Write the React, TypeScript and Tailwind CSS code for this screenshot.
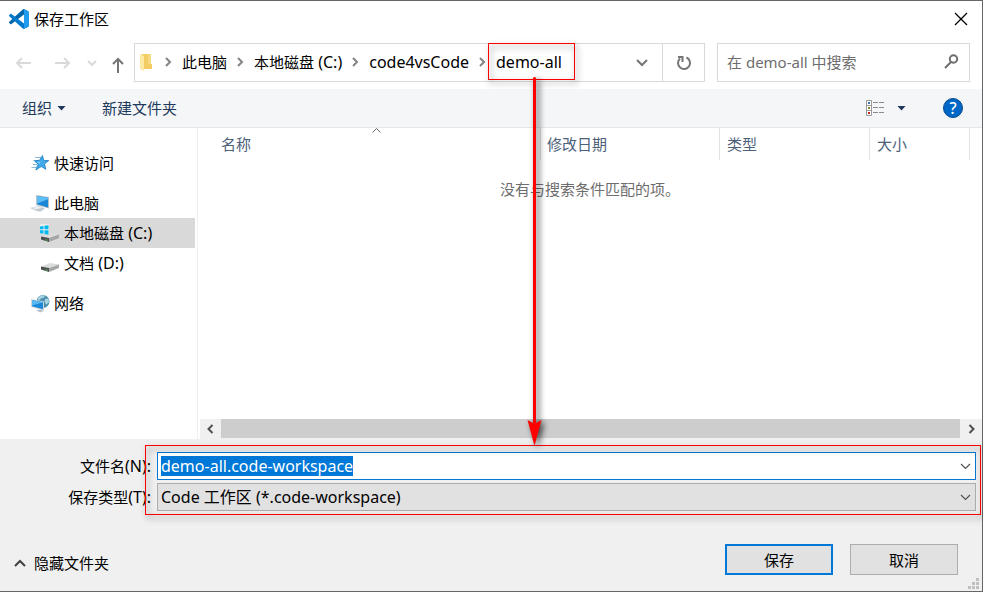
import { useEffect, useRef, type ReactNode } from "react";

function VsCodeLogo() {
  return (
    <svg viewBox="0 0 100 100" className="size-5" aria-hidden="true">
      <path fill="#0065A9" d="M96.4614 10.7962L75.8569 0.875542C73.4719 -0.272773 70.6217 0.211611 68.75 2.08333L1.29858 63.5832C-0.515693 65.2373 -0.513607 68.0937 1.30308 69.7452L6.81272 74.754C8.29793 76.1042 10.5347 76.2036 12.1338 74.9905L93.3609 13.3699C96.086 11.3026 100 13.2462 100 16.6667V16.4275C100 14.0265 98.6246 11.8378 96.4614 10.7962Z" />
      <path fill="#007ACC" d="M96.4614 89.2038L75.8569 99.1245C73.4719 100.273 70.6217 99.7884 68.75 97.9167L1.29858 36.4169C-0.515693 34.7627 -0.513607 31.9063 1.30308 30.2548L6.81272 25.246C8.29793 23.8958 10.5347 23.7964 12.1338 25.0095L93.3609 86.6301C96.086 88.6974 100 86.7538 100 83.3334V83.5726C100 85.9735 98.6246 88.1622 96.4614 89.2038Z" />
      <path fill="#1F9CF0" d="M75.8578 99.1263C73.4721 100.274 70.6219 99.7885 68.75 97.9166C71.0564 100.223 75 98.5895 75 95.3278V4.67213C75 1.41039 71.0564 -0.223106 68.75 2.08329C70.6219 0.211402 73.4721 -0.273666 75.8578 0.873633L96.4587 10.7807C98.6234 11.8217 100 14.0112 100 16.4132V83.5871C100 85.9891 98.6234 88.1786 96.4586 89.2196L75.8578 99.1263Z" />
    </svg>
  );
}

type StrokeProps = { box: string; d: string; className: string; width?: number };

function Stroke({ box, d, className, width = 2 }: StrokeProps) {
  return (
    <svg viewBox={box} className={className} fill="none" stroke="currentColor" strokeWidth={width} aria-hidden="true">
      <path d={d} />
    </svg>
  );
}

function Caret() {
  return (
    <svg viewBox="0 0 9 5" className="h-[5px] w-[9px]" aria-hidden="true">
      <path fill="#1e395b" d="M0.5 0h8L4.500 4.500z" />
    </svg>
  );
}

function FolderIcon() {
  return (
    <svg viewBox="0 0 12 18" className="h-[18px] w-3" aria-hidden="true">
      <path fill="#f3cd64" d="M2 1h9v10h1v5H4z" />
      <path fill="#f7da84" d="M8 1h3v10h-3z" />
      <path fill="#ffe9a6" d="M0 2q0-1 1-1l3 2.500v14.500l-4-2z" />
    </svg>
  );
}

function StarIcon() {
  return (
    <svg viewBox="0 0 18 18" className="h-[18px] w-[18px]" aria-hidden="true">
      <path fill="none" stroke="#8ab9dc" d="M4 3.500h6M2.500 6.500h5M2 10.500h4M0.500 13.500h5" />
      <path fill="#3fa9ec" stroke="#1c7cc0" strokeWidth="0.8" d="M11.500 1.500l1.200 4.900 5 .2-4.200 3.400 1.300 5.300-4.500-2.800-5.500 3.500 2.300-5.700-3.600-3.400 5-.6z" />
      <path fill="#7fcdf8" d="M11 4l-1.500 3.500-3.500.5 2.500 2z" />
    </svg>
  );
}

function ComputerIcon() {
  return (
    <svg viewBox="0 0 20 18" className="h-[18px] w-5" aria-hidden="true">
      <path fill="#c3cbd1" d="M0 14l9-2 6 2.500-4 3H8z" />
      <path fill="#eef1f3" d="M2 14l7-1.500 3 1.200-6 1.600z" />
      <path fill="#b8c1c8" d="M6 1l13 2v11.500L6 11z" />
      <path fill="#1b86d6" d="M7 2l11 1.800v9.600L7 10.300z" />
      <path fill="#5dbdf5" d="M7 2l11 1.800v1.500L7 9.500z" />
    </svg>
  );
}

function DriveIcon({ system = false }: { system?: boolean }) {
  return (
    <svg viewBox="0 0 20 18" className="h-[18px] w-5" aria-hidden="true">
      <path fill="#dcdcdc" d="M1 12.500L10 9l9 1.500-10 3.500z" />
      <path fill="#4b4f50" d="M1 12.500L9 14v4l-8-2.500z" />
      <path fill="#a4a6a8" d="M9 14l10-3.500v3.500L9 18z" />
      <path fill="#58c45a" d="M5.500 15.300l2 .5v1l-2-.5z" />
      {system && (
        <>
          <path fill="#ffffff" fillOpacity="0.5" d="M0 0h9v10H0z" />
          <path fill="#00b7ee" d="M0 2.500L3.500 2v3.200H0zM4.500 1.800L8.500 1.200v4h-4zM0 6.200h3.500v3.500L0 9.200zM4.500 6.200h4v4.500l-4-.7z" />
        </>
      )}
    </svg>
  );
}

function NetworkIcon() {
  return (
    <svg viewBox="0 0 19 19" className="size-[19px]" aria-hidden="true">
      <circle cx="12" cy="7.500" r="6.500" fill="#4d8fae" />
      <path fill="#a9d4e4" d="M8 3q3-2.500 6-1.500l-1 2-3 1-2 2-1.500-1zM14 5l3.500-.5.5 4-3 2-1.500-3z" />
      <path fill="#cdd5da" d="M0 5l13 2.500v9L0 13z" />
      <path fill="#1c88d8" d="M1 6l11 2.300v7L1 12.200z" />
      <path fill="#58b9f2" d="M1 6l11 2.300L1 11.500z" />
      <path fill="#b9c1c7" d="M5 16l5-.5 3 1.500-4 1.500z" />
    </svg>
  );
}

function ViewIcon() {
  return (
    <svg viewBox="0 0 19 16" className="h-4 w-[19px]" aria-hidden="true">
      <path fill="#fff" stroke="#9a9a9a" d="M0.500 0.500h5v15h-5zM0.500 5.500h5M0.500 10.500h5" />
      <path stroke="#8a8a8a" d="M7 2.500h5M13 2.500h5M7 7.500h5M13 7.500h5M7 12.500h5M13 12.500h5" />
      <path fill="#3c78b4" d="M2 2h2v2H2z" />
      <path fill="#8a8a2a" d="M2 7h2v2H2z" />
      <path fill="#c82a1a" d="M2 12h2v2H2z" />
    </svg>
  );
}

function Latin({ children }: { children: ReactNode }) {
  return <span className="text-base leading-5">{children}</span>;
}

function CrumbArrow() {
  return (
    <span className="flex w-[27px] justify-center text-[#848484]">
      <Stroke box="0 0 7 10" d="M1 1l4 4-4 4" className="h-[10px] w-[7px]" />
    </span>
  );
}

function Crumb({ children }: { children: ReactNode }) {
  return (
    <button type="button" className="whitespace-pre">
      {children}
    </button>
  );
}

type PlaceProps = { icon: ReactNode; children: ReactNode; nested?: boolean; selected?: boolean };

function Place({ icon, children, nested = false, selected = false }: PlaceProps) {
  return (
    <li className={selected ? "bg-[#d9d9d9]" : ""}>
      <button
        type="button"
        className={`flex h-[30px] w-full items-center gap-1 whitespace-pre ${nested ? "pl-10" : "pl-[30px]"}`}
      >
        <span className="flex w-5 justify-center">{icon}</span>
        <span>{children}</span>
      </button>
    </li>
  );
}

const headCell = "border-r border-[#e2e2e2] text-left font-normal";
const outline = "pointer-events-none absolute z-10 border border-[#f00] drop-shadow-[2px_3px_3px_rgba(0,0,0,0.6)]";

export default function App() {
  const nameRef = useRef<HTMLInputElement>(null);

  useEffect(() => {
    nameRef.current?.focus();
    nameRef.current?.select();
  }, []);

  return (
    <div className="flex min-h-screen flex-col border-t border-r border-b border-[#666] bg-white font-['Noto_Sans','Noto_Sans_CJK_SC',sans-serif] text-[15px] leading-5 text-black">
      <header className="flex h-9 items-center pr-3.5 pl-[9px]">
        <VsCodeLogo />
        <h1 className="ml-[5px] flex-1">保存工作区</h1>
        <button type="button" aria-label="关闭">
          <Stroke box="0 0 14 14" d="M1 1l12 12M13 1L1 13" width={1.3} className="size-3.5" />
        </button>
      </header>

      <div className="mt-1.5 mb-[7px] flex h-[39px] pr-3">
        <nav className="flex w-[134px] items-center pl-[15px] text-[#d9d9d9]">
          <button type="button" aria-label="后退">
            <Stroke box="0 0 16 12" d="M16 6H2M7 1L2 6l5 5" className="h-3 w-4" />
          </button>
          <button type="button" aria-label="前进" className="ml-6">
            <Stroke box="0 0 16 12" d="M0 6h14M9 1l5 5-5 5" className="h-3 w-4" />
          </button>
          <button type="button" aria-label="最近位置" className="ml-4">
            <Stroke box="0 0 10 6" d="M1 1l4 4 4-4" className="h-1.5 w-2.5" />
          </button>
          <button type="button" aria-label="上移" className="mt-1 ml-[15px] text-[#757575]">
            <Stroke box="0 0 12 16" d="M6 16V2M1 7l5-5 5 5" className="h-4 w-3" />
          </button>
        </nav>

        <div className="mr-3 flex flex-1 items-stretch border border-[#d9d9d9]">
          <div className="flex flex-1 items-center pb-0.5 pl-[5px]">
            <FolderIcon />
            <span className="ml-[3px]">
              <CrumbArrow />
            </span>
            <Crumb>此电脑</Crumb>
            <CrumbArrow />
            <Crumb>
              本地磁盘<Latin> (C:)</Latin>
            </Crumb>
            <CrumbArrow />
            <Crumb>
              <Latin>code4vsCode</Latin>
            </Crumb>
            <CrumbArrow />
            <div className="relative flex h-full items-center">
              <Crumb>
                <Latin>demo-all</Latin>
              </Crumb>
              <div className={`${outline} -top-px -right-[13px] -bottom-px -left-2`} />
              <svg
                viewBox="0 0 24 372"
                className="pointer-events-none absolute top-[33px] left-[26px] z-20 h-[372px] w-6 overflow-visible drop-shadow-[3px_2px_3px_rgba(0,0,0,0.7)]"
                aria-hidden="true"
              >
                <path fill="#f00" d="M11 1q1.500-2 3 0v345l5.500-3-7 26-7-26 5.500 3z" />
              </svg>
            </div>
          </div>
          <button type="button" aria-label="历史记录" className="flex w-10 items-center justify-center text-[#757575]">
            <Stroke box="0 0 12 8" d="M1 1l5 5 5-5" className="h-2 w-3" />
          </button>
          <button type="button" aria-label="刷新" className="flex w-[42px] items-center justify-center border-l border-[#d9d9d9] text-[#757575]">
            <Stroke box="0 0 16 16" d="M10.500 2.500A6 6 0 1 1 4 3.500M2 2h4.500v5" className="size-4" />
          </button>
        </div>

        <label className="flex w-[253px] items-center border border-[#d9d9d9] pr-2.5 pb-0.5 pl-[9px]">
          <input
            type="text"
            aria-label="搜索"
            placeholder="在 demo-all 中搜索"
            className="min-w-0 flex-1 outline-none placeholder:text-[#6d6d6d] placeholder:opacity-100"
          />
          <span className="text-[#6d6d6d]">
            <svg viewBox="0 0 15 15" className="size-[15px]" fill="none" stroke="currentColor" strokeWidth="2" aria-hidden="true">
              <circle cx="9.500" cy="5" r="3.700" />
              <path d="M7 8L1 14" />
            </svg>
          </span>
        </label>
      </div>

      <div className="flex h-[39px] items-center border-b border-[#e5e7e9] bg-[#f4f6f8] pr-[19px] pl-[22px] text-[#1e395b]">
        <button type="button" className="flex items-center gap-[5px]">
          组织
          <Caret />
        </button>
        <button type="button" className="ml-9">
          新建文件夹
        </button>
        <span className="flex-1" />
        <button type="button" aria-label="更改视图" className="flex items-center gap-3">
          <ViewIcon />
          <Caret />
        </button>
        <button
          type="button"
          aria-label="帮助"
          className="ml-[37px] flex size-5 items-center justify-center rounded-full border border-[#0a4a88] bg-[#0067c8] text-base font-medium text-white"
        >
          ?
        </button>
      </div>

      <main className="flex flex-1">
        <aside className="w-[198px] border-r border-[#f0f0f0] pt-5 pr-0.5">
          <ul>
            <Place icon={<StarIcon />}>快速访问</Place>
          </ul>
          <ul className="mt-2.5">
            <Place icon={<ComputerIcon />}>此电脑</Place>
            <Place icon={<DriveIcon system />} nested selected>
              本地磁盘<Latin> (C:)</Latin>
            </Place>
            <Place icon={<DriveIcon />} nested>
              文档<Latin> (D:)</Latin>
            </Place>
          </ul>
          <ul className="mt-2.5">
            <Place icon={<NetworkIcon />}>网络</Place>
          </ul>
        </aside>

        <section className="flex min-w-0 flex-1 flex-col">
          <div className="pr-3 pl-[15px]">
            <table className="w-full table-fixed border-collapse text-[#4c607a]">
              <thead>
                <tr className="h-8">
                  <th className={`${headCell} px-2`}>
                    <span className="relative block">
                      名称
                      <span className="absolute inset-x-0 -top-1.5 flex justify-center text-[#6d6d6d]">
                        <Stroke box="0 0 9 5" d="M0.500 4.500l4-4 4 4" width={1} className="h-[5px] w-[9px]" />
                      </span>
                    </span>
                  </th>
                  <th className={`${headCell} w-[179px] px-1.5`}>修改日期</th>
                  <th className={`${headCell} w-[150px] px-[7px]`}>类型</th>
                  <th className={`${headCell} w-[100px] px-[7px]`}>大小</th>
                </tr>
              </thead>
            </table>
          </div>
          <p className="mt-[19px] flex-1 text-center text-[#6d6d6d]">没有与搜索条件匹配的项。</p>
          <div className="ml-0.5 flex h-5 bg-[#f0f0f0] pb-px text-[#505050]">
            <button type="button" aria-label="向左滚动" className="flex w-[21px] items-center justify-center">
              <Stroke box="0 0 8 10" d="M5.500 1l-4 4 4 4" className="h-2.5 w-2" />
            </button>
            <span className="flex-1 bg-[#cdcdcd]" />
            <button type="button" aria-label="向右滚动" className="flex w-[22px] items-center justify-center">
              <Stroke box="0 0 8 10" d="M2.500 1l4 4-4 4" className="h-2.5 w-2" />
            </button>
          </div>
        </section>
      </main>

      <footer className="relative bg-[#f0f0f0] pt-[13px] pb-4">
        <div className="relative grid grid-cols-[151px_1fr] items-center gap-x-1.5 gap-y-[3px] pr-1.5">
          <label htmlFor="file-name" className="text-right">
            文件名<Latin>(N):</Latin>
          </label>
          <div className="flex h-7 items-center border border-[#0078d7] bg-white pr-1 pl-[3px]">
            <input
              id="file-name"
              ref={nameRef}
              type="text"
              defaultValue="demo-all.code-workspace"
              className="h-5 min-w-0 flex-1 text-base leading-5 outline-none selection:bg-[#0078d7] selection:text-white"
            />
            <button type="button" aria-label="展开" className="text-[#505050]">
              <Stroke box="0 0 11 7" d="M1 1l4.500 4.500L10 1" width={1.2} className="h-[7px] w-[11px]" />
            </button>
          </div>
          <label htmlFor="file-type" className="text-right">
            保存类型<Latin>(T):</Latin>
          </label>
          <div className="relative h-7">
            <select
              id="file-type"
              className="h-full w-full appearance-none border border-[#adadad] bg-[#e1e1e1] pl-[3px] text-base leading-5 outline-none"
            >
              <option>Code 工作区 (*.code-workspace)</option>
            </select>
            <span className="pointer-events-none absolute inset-y-0 right-[5px] flex items-center text-[#505050]">
              <Stroke box="0 0 11 7" d="M1 1l4.500 4.500L10 1" width={1.2} className="h-[7px] w-[11px]" />
            </span>
          </div>
          <div className={`${outline} -top-[7px] right-px -bottom-1 left-[145px]`} />
        </div>

        <div className="mt-[33px] flex h-[31px] items-stretch pr-6 pl-3.5">
          <button type="button" className="flex items-center gap-2 pt-1.5">
            <span className="text-[#404040]">
              <Stroke box="0 0 12 8" d="M1 7l5-5 5 5" className="h-2 w-3" />
            </span>
            隐藏文件夹
          </button>
          <span className="flex-1" />
          <button type="submit" className="w-[108px] border-2 border-[#0078d7] bg-[#e1e1e1]">
            保存
          </button>
          <button type="button" className="ml-[17px] w-[108px] border border-[#adadad] bg-[#e1e1e1]">
            取消
          </button>
        </div>

        <svg viewBox="0 0 11 11" className="absolute right-[3px] bottom-0.5 size-[11px]" aria-hidden="true">
          <path fill="#bfbfbf" d="M8 0h3v3H8zM4 4h3v3H4zM8 4h3v3H8zM0 8h3v3H0zM4 8h3v3H4zM8 8h3v3H8z" />
        </svg>
      </footer>
    </div>
  );
}
